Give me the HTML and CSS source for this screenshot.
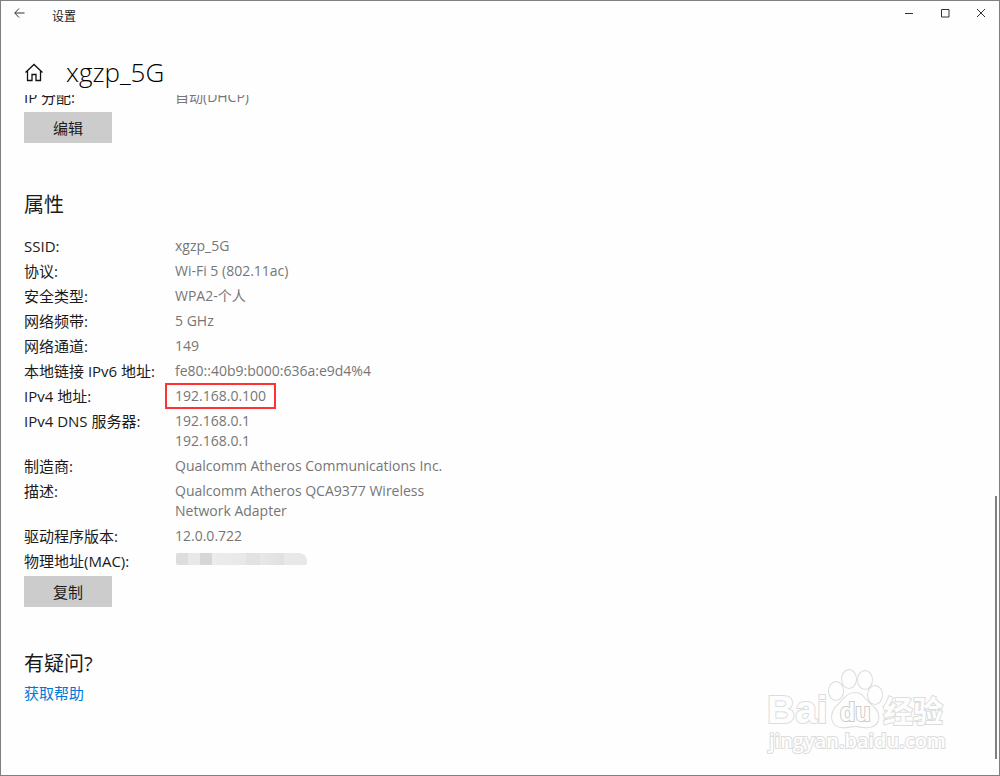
FILE: index.html
```html
<!DOCTYPE html>
<html lang="zh-CN">
<head>
    <meta charset="UTF-8">
    <meta name="viewport" content="width=device-width, initial-scale=1.0">
    <title>设置</title>
    <link rel="stylesheet" href="styles.css">
</head>
<body>

<div class="window">
    <div class="titlebar">
        <button class="back-button" aria-label="返回">
            <svg width="11" height="10" viewBox="0 0 11 10"><path d="M5 0.5 L0.8 5 L5 9.5 M0.8 5 H10.5"/></svg>
        </button>
        <span class="app-name">设置</span>
        <div class="window-buttons">
            <button aria-label="最小化"><svg width="10" height="10" viewBox="0 0 10 10"><path d="M1 5.5 H9"/></svg></button>
            <button aria-label="最大化"><svg width="10" height="10" viewBox="0 0 10 10"><path d="M1.5 1.5 H9 V9 H1.5 Z"/></svg></button>
            <button aria-label="关闭"><svg width="10" height="10" viewBox="0 0 10 10"><path d="M1 1 L9 9 M9 1 L1 9"/></svg></button>
        </div>
    </div>

    <header class="page-header">
        <svg class="home-icon" width="20" height="20" viewBox="0 0 20 20"><path d="M1.5 10.5 L10 2.5 L18.5 10.5 M3.5 9 V18.5 H8 V12.5 H12 V18.5 H16.5 V9"/></svg>
        <h1>xgzp_5G</h1>
    </header>

    <main class="content">
        <!-- IP settings, scrolled partly under the header -->
        <table class="info ip-info">
            <tr><th scope="row">IP 分配:</th><td>自动(DHCP)</td></tr>
        </table>
        <button class="action">编辑</button>

        <h2>属性</h2>
        <table class="info">
            <tr><th scope="row">SSID:</th><td>xgzp_5G</td></tr>
            <tr><th scope="row">协议:</th><td>Wi-Fi 5 (802.11ac)</td></tr>
            <tr><th scope="row">安全类型:</th><td>WPA2-个人</td></tr>
            <tr><th scope="row">网络频带:</th><td>5 GHz</td></tr>
            <tr><th scope="row">网络通道:</th><td>149</td></tr>
            <tr><th scope="row">本地链接 IPv6 地址:</th><td>fe80::40b9:b000:636a:e9d4%4</td></tr>
            <tr><th scope="row">IPv4 地址:</th><td><span class="marked">192.168.0.100</span></td></tr>
            <tr><th scope="row">IPv4 DNS 服务器:</th><td>192.168.0.1<br>192.168.0.1</td></tr>
            <tr><th scope="row">制造商:</th><td>Qualcomm Atheros Communications Inc.</td></tr>
            <tr><th scope="row">描述:</th><td>Qualcomm Atheros QCA9377 Wireless<br>Network Adapter</td></tr>
            <tr><th scope="row">驱动程序版本:</th><td>12.0.0.722</td></tr>
            <tr><th scope="row">物理地址(MAC):</th><td><span class="hidden-mac"></span></td></tr>
        </table>
        <button class="action">复制</button>

        <h2 class="help-title">有疑问?</h2>
        <a class="help-link" href="#">获取帮助</a>
    </main>

    <div class="scrollbar"></div>

    <svg class="watermark" width="184" height="90" viewBox="0 0 184 90">
        <g class="shape">
            <text class="brand" x="1" y="56">Bai</text>
            <ellipse cx="70" cy="24" rx="7" ry="9"/>
            <ellipse cx="83" cy="12" rx="7" ry="9"/>
            <ellipse cx="99" cy="13" rx="7" ry="9"/>
            <ellipse cx="109" cy="28" rx="7" ry="9"/>
            <path d="M89 26 C97 26 99 33 105 38 C116 46 114 59 103 60 C98 61 94 59 89 59 C84 59 80 61 75 60 C64 59 64 46 71 39 C77 34 80 26 89 26 Z"/>
            <text class="du" x="74" y="54">du</text>
            <text class="cjk" x="117" y="55">经验</text>
            <text class="site" x="3" y="81">jingyan.baidu.com</text>
        </g>
    </svg>
</div>

</body>
</html>
```
FILE: styles.css
```css
* {
    box-sizing: border-box;
}

body {
    margin: 0;
    font-family: "Open Sans", "Noto Sans CJK SC", sans-serif;
    font-size: 14px;
    color: #1a1a1a;
    background-color: #fefefe;
}

.window {
    position: relative;
    min-height: 100vh;
    border: 1px solid #808080;
    overflow: hidden;
}

button {
    font-family: inherit;
    color: inherit;
    border: none;
    padding: 0;
    cursor: pointer;
}

svg {
    fill: none;
    stroke: #333;
    stroke-width: 1;
}

.titlebar {
    display: flex;
    align-items: flex-start;
    height: 32px;
}

.titlebar button {
    display: flex;
    align-items: center;
    justify-content: center;
    width: 36px;
    height: 24px;
    background: none;
}

.app-name {
    margin-left: 15px;
    font-size: 12px;
    line-height: 32px;
}

.window-buttons {
    display: flex;
    margin-left: auto;
}

.page-header {
    display: flex;
    align-items: center;
    height: 62px;
    padding: 15px 23px 0;
}

.home-icon {
    stroke: #111;
    stroke-width: 1.3;
}

h1 {
    margin: 0 0 0 22px;
    font-size: 26px;
    font-weight: 300;
    line-height: 36px;
    color: #000;
}

.content {
    overflow: hidden;
    padding: 0 23px 24px;
}

.info {
    border-collapse: collapse;
    line-height: 20px;
}

.info th,
.info td {
    padding: 0 0 5px;
    text-align: left;
    vertical-align: top;
}

.info th {
    width: 151px;
    font-size: 15px;
    font-weight: 400;
}

.info td {
    color: #767676;
}

.ip-info {
    margin-top: -8px;
}

.action {
    display: block;
    width: 88px;
    height: 31px;
    font-size: 15px;
    background-color: #ccc;
}

h2 {
    margin: 48px 0 17px;
    font-size: 20px;
    font-weight: 400;
    line-height: 28px;
}

.marked {
    position: relative;
}

/* red frame around the address */
.marked::after {
    content: "";
    position: absolute;
    inset: -3px -10px -4px -10px;
    border: 2px solid #f33;
}

.hidden-mac {
    display: block;
    width: 131px;
    height: 12px;
    margin: 2px 0 0 1px;
    border-radius: 2px 8px 2px 2px;
    background: linear-gradient(90deg, #ddd 12px, #e8e8e8 12px, #e8e8e8 24px, #d6d6d6 24px, #d6d6d6 36px, #ececec 36px, #e8e8e8 70px, #e2e2e2 70px, #e2e2e2 84px, #e8e8e8 84px, #e0e0e0 108px, #e8e8e8 108px);
}

.help-title {
    margin: 43px 0 5px;
}

.help-link {
    font-size: 15px;
    line-height: 20px;
    color: #0078d7;
    text-decoration: none;
}

.scrollbar {
    position: absolute;
    top: 64%;
    right: 2px;
    bottom: 16px;
    width: 2px;
    background-color: #808080;
}

.watermark {
    position: absolute;
    right: 49px;
    bottom: 18px;
}

.shape {
    fill: #fefefe;
    stroke: #dcdcdc;
    stroke-width: 2;
    paint-order: stroke;
}

.brand,
.du {
    font-family: "Liberation Sans", sans-serif;
    font-weight: 700;
}

.brand {
    font-size: 39px;
}

.du {
    font-size: 25px;
    stroke: #ccc;
}

.cjk {
    font-family: "Noto Sans CJK SC", sans-serif;
    font-size: 30px;
    font-weight: 700;
}

.site {
    font-size: 20px;
    font-weight: 600;
}
```
